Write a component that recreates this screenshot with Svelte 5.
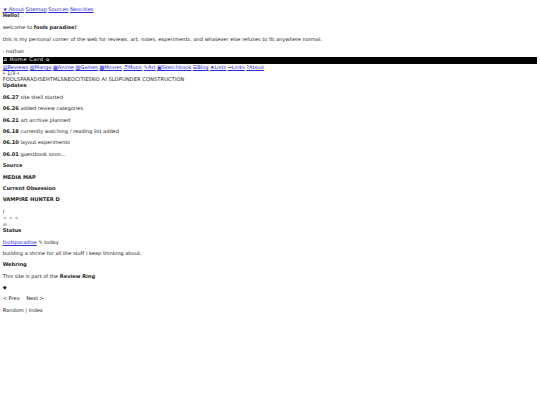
<script>
  const topLinks = ["★ About", "Sitemap", "Sources", "Neocities"];
  const navLinks = ["▤Reviews", "▥Manga", "▦Anime", "▧Games", "▩Movies", "♬Music", "✎Art", "▣Sketchbook", "☰Blog", "★Lists", "⇝Links", "?About"];
  const updates = [
    ["06.27", "site shell started"],
    ["06.26", "added review categories"],
    ["06.21", "art archive planned"],
    ["06.18", "currently watching / reading list added"],
    ["06.10", "layout experiments"],
    ["06.01", "guestbook soon..."],
  ];
</script>

<div class="page">
  <nav class="top">
    {#each topLinks as link}
      <a href="#top">{link}</a>{" "}
    {/each}
  </nav>

  <h3>Hello!</h3>
  <p class="welcome">welcome to <b>fools paradise!</b></p>
  <p>this is my personal corner of the web for reviews, art, notes, experiments, and whatever else refuses to fit anywhere normal.</p>
  <p class="sign">- nathan</p>

  <div class="bar">⌂ Home Card ⌂</div>
  <nav class="links">
    {#each navLinks as link}
      <a href="#top">{link}</a>{" "}
    {/each}
  </nav>
  <div>⇠1/3⇢</div>
  <div class="ticker">FOOLSPARADISEHTMLSNEOCITIESNO AI SLOPUNDER CONSTRUCTION</div>

  <h3>Updates</h3>
  <div class="updates">
    {#each updates as [date, text]}
      <p><b>{date}</b> {text}</p>
    {/each}
  </div>

  <p><b>Source</b></p>
  <p><b>MEDIA MAP</b></p>
  <p><b>Current Obsession</b></p>
  <p><b>VAMPIRE HUNTER D</b></p>

  <div class="paren">(</div>
  <div class="stars">✧ ✧ ✧</div>
  <div class="loop">∞</div>

  <h3>Status</h3>
  <p><a href="#top">foolsparadise</a> ✎ today</p>
  <p>building a shrine for all the stuff i keep thinking about.</p>
  <p><b>Webring</b></p>
  <p>This site is part of the <b>Review Ring</b></p>
  <p>◆</p>
  <p>&lt; Prev &nbsp;&nbsp; Next &gt;</p>
  <p>Random | Index</p>
</div>

<style>
  :global(body) {
    background: #fff;
    color: #222;
  }

  .page {
    padding: 7.4px 2.67px 0;
    font-family: "DejaVu Sans", Verdana, sans-serif;
    font-size: 5.1px;
    line-height: 6.1px;
    text-rendering: geometricPrecision;
  }

  a {
    color: #2a2ae0;
  }

  h3 {
    font-size: inherit;
    margin: 0;
  }

  p {
    margin: 5.25px 0;
  }

  .welcome {
    margin-top: 5.8px;
  }

  .sign {
    margin-top: 6px;
    margin-bottom: 0;
  }

  .bar {
    margin-top: 2.4px;
    background: #000;
    color: #fff;
    letter-spacing: 0.6px;
    padding: 0 1px;
    height: 6.6px;
  }

  .links {
    margin-top: 1.2px;
    word-spacing: -0.25px;
  }

  .ticker {
    letter-spacing: 0.1px;
  }

  .updates {
    padding-top: 0.4px;
  }

  .paren {
    margin-top: 4.6px;
  }

  .stars {
    margin-top: 1px;
    color: #555;
  }

  .loop {
    margin-top: 0.6px;
  }
</style>
